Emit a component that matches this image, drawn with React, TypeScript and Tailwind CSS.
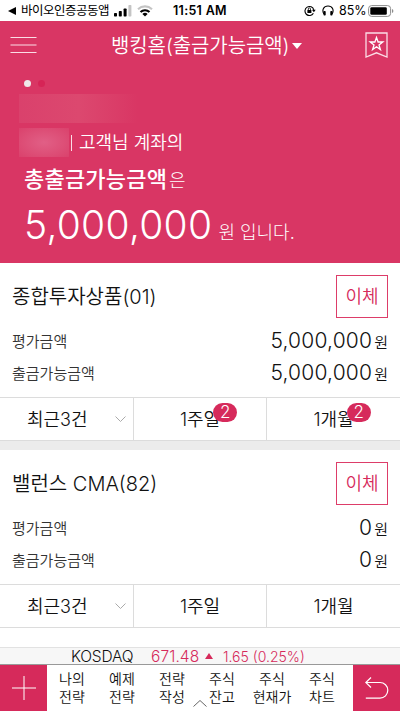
import clsx from "clsx";

type Account = {
  name: string;
  amount: string;
  badge?: number;
};

const accounts: Account[] = [
  { name: "종합투자상품(01)", amount: "5,000,000", badge: 2 },
  { name: "밸런스 CMA(82)", amount: "0" },
];

const menus = [
  ["나의", "전략"],
  ["예제", "전략"],
  ["전략", "작성"],
  ["주식", "잔고"],
  ["주식", "현재가"],
  ["주식", "차트"],
];

const StatusBar = () => (
  <div className="flex h-[21px] shrink-0 items-center bg-white text-black">
    <svg className="ml-[8px] h-[8px] w-[8px]" viewBox="0 0 8 8">
      <path d="M0 4 8 0v8z" />
    </svg>
    <span className="ml-[5px] w-[88px] whitespace-nowrap text-[12.5px] leading-[20px] tracking-[-0.5px]">
      바이오인증공동앱
    </span>
    <svg className="ml-[5px] h-[12px] w-[18px]" viewBox="0 0 18 12">
      <rect x="0" y="8" width="3" height="3.5" rx=".7" />
      <rect x="4.8" y="6" width="3" height="5.5" rx=".7" />
      <rect x="9.6" y="3.5" width="3" height="8" rx=".7" />
      <rect x="14.4" y="0" width="3" height="11.5" rx=".7" fill="#c4c4c4" />
    </svg>
    <svg className="ml-[5px] h-[12px] w-[16px]" viewBox="0 0 16 12" fill="none">
      <path d="M1 4.2a10.2 10.2 0 0 1 14 0" stroke="#c4c4c4" strokeWidth="2.1" />
      <path d="M3.5 7a6.5 6.5 0 0 1 9 0" stroke="#000" strokeWidth="2.1" />
      <path d="M5.4 8.9a3.8 3.8 0 0 1 5.2 0L8 11.6z" fill="#000" />
    </svg>
    <span className="ml-[20px] mt-[2px] w-[57px] whitespace-nowrap text-[12.5px] font-semibold tracking-[0.3px]">
      11:51 AM
    </span>
    <svg className="ml-[74px] h-[11px] w-[12px]" viewBox="0 0 12 11" fill="none" stroke="#000">
      <path d="M9.4 8.2A4.5 4.5 0 1 1 9.8 4.8" strokeWidth="1.1" />
      <path d="M7.9 4.8h3.8L9.9 7.2z" fill="#000" stroke="none" />
      <rect x="3.4" y="5" width="4" height="3" fill="#000" stroke="none" />
      <path d="M4.3 5V4a1.1 1.1 0 0 1 2.2 0v1" strokeWidth=".8" />
    </svg>
    <svg className="ml-[6px] h-[11px] w-[12px]" viewBox="0 0 12 11" fill="none">
      <path d="M1.9 9C-.4 5.2 1.6 1 6 1s6.4 4.2 4.1 8" stroke="#000" strokeWidth="1.1" />
      <rect x="1.5" y="6" width="2.2" height="4.5" rx=".8" fill="#000" />
      <rect x="8.3" y="6" width="2.2" height="4.5" rx=".8" fill="#000" />
    </svg>
    <span className="ml-[5px] mt-[2px] w-[27px] whitespace-nowrap text-[12.5px] tracking-[-0.1px]">85%</span>
    <svg className="ml-[2px] h-[12px] w-[26px]" viewBox="0 0 26 12">
      <rect x=".6" y=".6" width="22" height="10.8" rx="3" fill="none" stroke="#8c8c8c" />
      <rect x="2.3" y="2.3" width="16.5" height="7.4" rx="1.3" />
      <path d="M24 4v4q1.4-.6 1.4-2T24 4" fill="#8c8c8c" />
    </svg>
  </div>
);

const Header = () => (
  <header className="flex h-[48px] items-center pl-[10px] pr-[12px]">
    <svg className="h-[18px] w-[27px]" viewBox="0 0 27 18" stroke="#fbdde6" strokeWidth="1.2">
      <path d="M.5 1.5h26M.5 9h26M.5 16.5h26" />
    </svg>
    <h1 className="ml-[74px] mt-[2px] whitespace-nowrap text-[20px] font-[350] leading-[28px] tracking-[-0.1px]">
      뱅킹홈(출금가능금액)
    </h1>
    <svg className="ml-[3px] mt-[2px] h-[6px] w-[10px]" viewBox="0 0 10 6" fill="#fff">
      <path d="M0 0h10L5 6z" />
    </svg>
    <svg className="ml-auto h-[27px] w-[23px]" viewBox="0 0 23 27" fill="none" stroke="#fbdde6" strokeWidth="1.3">
      <path d="M1 1h21v24l-10.5-4.2L1 25z" />
      <path d="m11.5 5.5 1.6 4.5h4.7L14 12.900l1.400 4.600-3.900-2.800-3.900 2.800L9 12.900 5.200 10h4.700z" stroke="#fff" />
    </svg>
  </header>
);

const Summary = () => (
  <section className="h-[194px] pl-[24px] pt-[11px]">
    <div className="flex gap-[7px]">
      <span className="h-[7px] w-[7px] rounded-full bg-[#eee7e8]" />
      <span className="h-[7px] w-[7px] rounded-full bg-[#d62456]" />
    </div>
    <div className="-ml-[5px] mt-[7px] h-[29px] w-[119px] bg-linear-to-r from-[#da416c] via-[#dc486f] to-[#d93664]" />
    <div className="mt-[5px] flex h-[29px] items-center">
      <div className="-ml-[5px] h-[29px] w-[50px] bg-radial from-[#e15f86] to-[#da416c]" />
      <span className="ml-[2px] h-[16px] w-px bg-[#fbdde6]" />
      <span className="ml-[7px] mt-px whitespace-nowrap text-[18px] font-[350] leading-[28px]">
        고객님 계좌의
      </span>
    </div>
    <div className="mt-[5px] flex h-[34px] items-center whitespace-nowrap">
      <span className="text-[22px] font-medium tracking-[0.2px]">총출금가능금액</span>
      <span className="ml-[2px] mt-[3px] text-[18px] font-light">은</span>
    </div>
    <div className="mt-[3px] flex h-[52px] items-baseline whitespace-nowrap leading-[52px]">
      <span className="text-[39px] font-light tracking-[0.3px]">5,000,000</span>
      <span className="ml-[6px] text-[18px] font-light">원 입니다.</span>
    </div>
  </section>
);

const AmountRow = ({ label, amount }: { label: string; amount: string }) => (
  <div className="flex h-[32px] items-center justify-between">
    <span className="text-[15px] font-[350] text-[#333]">{label}</span>
    <span className="flex items-baseline leading-[32px]">
      <span className="text-[21px] font-light tracking-[0.2px]">{amount}</span>
      <span className="ml-[2px] text-[15px] font-[350]">원</span>
    </span>
  </div>
);

const Tab = ({ label, badge }: { label: string; badge?: number }) => (
  <div className="flex w-[133px] items-center justify-center border-l border-[#dcdcdc] last:w-[134px]">
    <span className="relative whitespace-nowrap">
      {label}
      {badge && (
        <span className="absolute -right-[17px] -top-[3px] flex h-[19px] w-[24px] items-center justify-center rounded-full bg-[#d62a5b] text-[17px] font-light leading-none text-white">
          {badge}
        </span>
      )}
    </span>
  </div>
);

const AccountCard = ({ name, amount, badge }: Account) => (
  <section className="bg-white">
    <div className="h-[134px] px-[12px] pt-[12px]">
      <div className="flex h-[43px] items-center justify-between">
        <h2 className="text-[20px] font-[350]">{name}</h2>
        <button className="h-[43px] w-[52px] border border-[#dd3d69] text-[18px] font-[350] text-[#d62a5b]">
          이체
        </button>
      </div>
      <div className="mt-[8px]">
        <AmountRow label="평가금액" amount={amount} />
        <AmountRow label="출금가능금액" amount={amount} />
      </div>
    </div>
    <div className="flex h-[44px] border-y border-[#dcdcdc] text-[18px] font-[350]">
      <div className="flex w-[133px] items-center pl-[27px]">
        <span className="w-[88px] whitespace-nowrap">최근3건</span>
        <svg className="h-[6px] w-[11px]" viewBox="0 0 11 6" fill="none" stroke="#aaa">
          <path d="m.5.5 5 5 5-5" />
        </svg>
      </div>
      <Tab label="1주일" badge={badge} />
      <Tab label="1개월" badge={badge} />
    </div>
  </section>
);

const Ticker = () => (
  <div className="flex h-[17px] items-center border-t border-[#e2e2e2] bg-[#f7f7f7] pl-[71px] font-light leading-[16px]">
    <span className="w-[80px] pt-px text-[15.5px] tracking-[-0.2px]">KOSDAQ</span>
    <span className="w-[54px] pt-px text-[15.5px] tracking-[0.1px] text-[#d62a5b]">671.48</span>
    <svg className="h-[6px] w-[8px]" viewBox="0 0 8 6" fill="#d62a5b">
      <path d="M4 0 8 6H0z" />
    </svg>
    <span className="ml-[10px] whitespace-nowrap pt-px text-[14px] text-[#d62a5b]">1.65 (0.25%)</span>
  </div>
);

const BottomBar = () => (
  <nav className="relative flex h-[47px] border-t border-[#999] bg-white">
    <div className="flex w-[47px] items-center justify-center bg-[#d62a5b]">
      <svg className="h-[24px] w-[24px]" viewBox="0 0 24 24" stroke="#fff">
        <path d="M12 0v24M0 12h24" />
      </svg>
    </div>
    {menus.map(([top, bottom]) => (
      <div
        key={top + bottom}
        className="w-[50px] whitespace-pre pt-[5px] text-center text-[14px] font-[350] leading-[17.5px] text-[#111]"
      >
        {`${top}\n${bottom}`}
      </div>
    ))}
    <div className="ml-auto flex w-[47px] items-center justify-center bg-[#d62a5b]">
      <svg className="h-[22px] w-[24px]" viewBox="0 0 24 22" fill="none" stroke="#fff" strokeWidth="1.2">
        <path d="M6 .5.8 5.5 6 10.5M.8 5.5H15a7.8 7.8 0 0 1 0 15.6H.8" />
      </svg>
    </div>
    <svg className="absolute bottom-[4px] left-[193px] h-[7px] w-[14px]" viewBox="0 0 14 7" fill="none" stroke="#666">
      <path d="m.5 6.5 6.5-6 6.5 6" />
    </svg>
  </nav>
);

export default function App() {
  return (
    <div className="flex h-[711px] w-[400px] flex-col overflow-hidden bg-white font-['Inter','Noto_Sans_CJK_KR',sans-serif] text-[#111]">
      <StatusBar />
      <div className="shrink-0 bg-[#d93664] text-white">
        <Header />
        <Summary />
      </div>
      {accounts.map((account, i) => (
        <div key={i} className={clsx("shrink-0", i > 0 && "border-t-[9px] border-[#ececec]")}>
          <AccountCard {...account} />
        </div>
      ))}
      <div className="mt-auto">
        <Ticker />
        <BottomBar />
      </div>
    </div>
  );
}
